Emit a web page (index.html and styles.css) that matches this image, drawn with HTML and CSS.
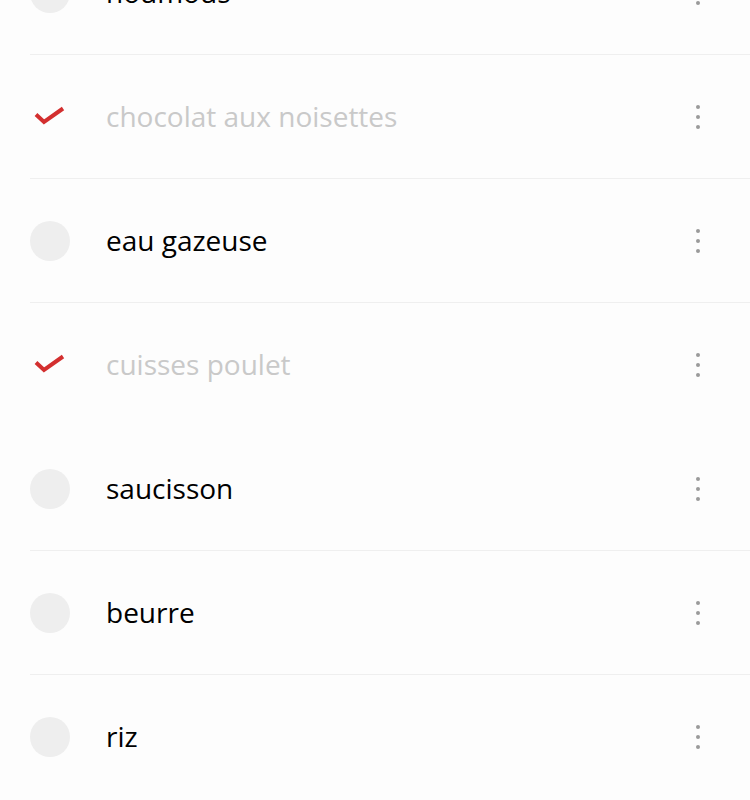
FILE: index.html
```html
<!DOCTYPE html>
<html lang="fr">
<head>
    <meta charset="UTF-8">
    <meta name="viewport" content="width=device-width, initial-scale=1.0">
    <title>Liste de courses</title>
    <link rel="stylesheet" href="styles.css">
</head>
<body>
    <ul class="list">
        <li class="item">
            <span class="check"></span>
            <span class="label">houmous</span>
            <span class="more"><i></i><i></i><i></i></span>
        </li>
        <li class="item done">
            <span class="check">
                <svg width="40" height="40" viewBox="0 0 40 40"><path d="M6 17.5 L14 25 L33 11.5" fill="none" stroke="#d32f2f" stroke-width="4"/></svg>
            </span>
            <span class="label">chocolat aux noisettes</span>
            <span class="more"><i></i><i></i><i></i></span>
        </li>
        <li class="item">
            <span class="check"></span>
            <span class="label">eau gazeuse</span>
            <span class="more"><i></i><i></i><i></i></span>
        </li>
        <li class="item done no-line">
            <span class="check">
                <svg width="40" height="40" viewBox="0 0 40 40"><path d="M6 17.5 L14 25 L33 11.5" fill="none" stroke="#d32f2f" stroke-width="4"/></svg>
            </span>
            <span class="label">cuisses poulet</span>
            <span class="more"><i></i><i></i><i></i></span>
        </li>
        <li class="item">
            <span class="check"></span>
            <span class="label">saucisson</span>
            <span class="more"><i></i><i></i><i></i></span>
        </li>
        <li class="item">
            <span class="check"></span>
            <span class="label">beurre</span>
            <span class="more"><i></i><i></i><i></i></span>
        </li>
        <li class="item no-line">
            <span class="check"></span>
            <span class="label">riz</span>
            <span class="more"><i></i><i></i><i></i></span>
        </li>
    </ul>
</body>
</html>
```

FILE: styles.css
```css
:root {
  --background-color: #fdfdfd;
  --border-color: #efefef;
  --circle-color: #eeeeee;
  --text-color: #000000;
  --done-color: #c9c9c9;
  --dot-color: #9a9a9a;
}

body {
  font-family: 'Open Sans', 'Noto Sans', sans-serif;
  background-color: var(--background-color);
  color: var(--text-color);
  margin: 0;
  padding: 0;
  overflow: hidden;
}

.list {
  list-style: none;
  margin: -69px 0 0 0;
  padding: 0 0 0 30px;
}

.item {
  display: flex;
  align-items: center;
  height: 123px;
  border-bottom: 1px solid var(--border-color);
}

.item.no-line {
  border-bottom-color: transparent;
}

.check {
  width: 40px;
  height: 40px;
  flex: none;
  border-radius: 50%;
  background-color: var(--circle-color);
}

.check svg {
  display: block;
}

.done .check {
  background-color: transparent;
}

.label {
  flex: 1;
  margin-left: 36px;
  font-size: 28px;
  line-height: 1;
  padding-bottom: 2px;
}

.done .label {
  color: var(--done-color);
}

.more {
  display: flex;
  flex-direction: column;
  align-items: center;
  gap: 6px;
  width: 4px;
  margin-right: 50px;
}

.more i {
  display: block;
  width: 4px;
  height: 4px;
  border-radius: 50%;
  background-color: var(--dot-color);
}
```
